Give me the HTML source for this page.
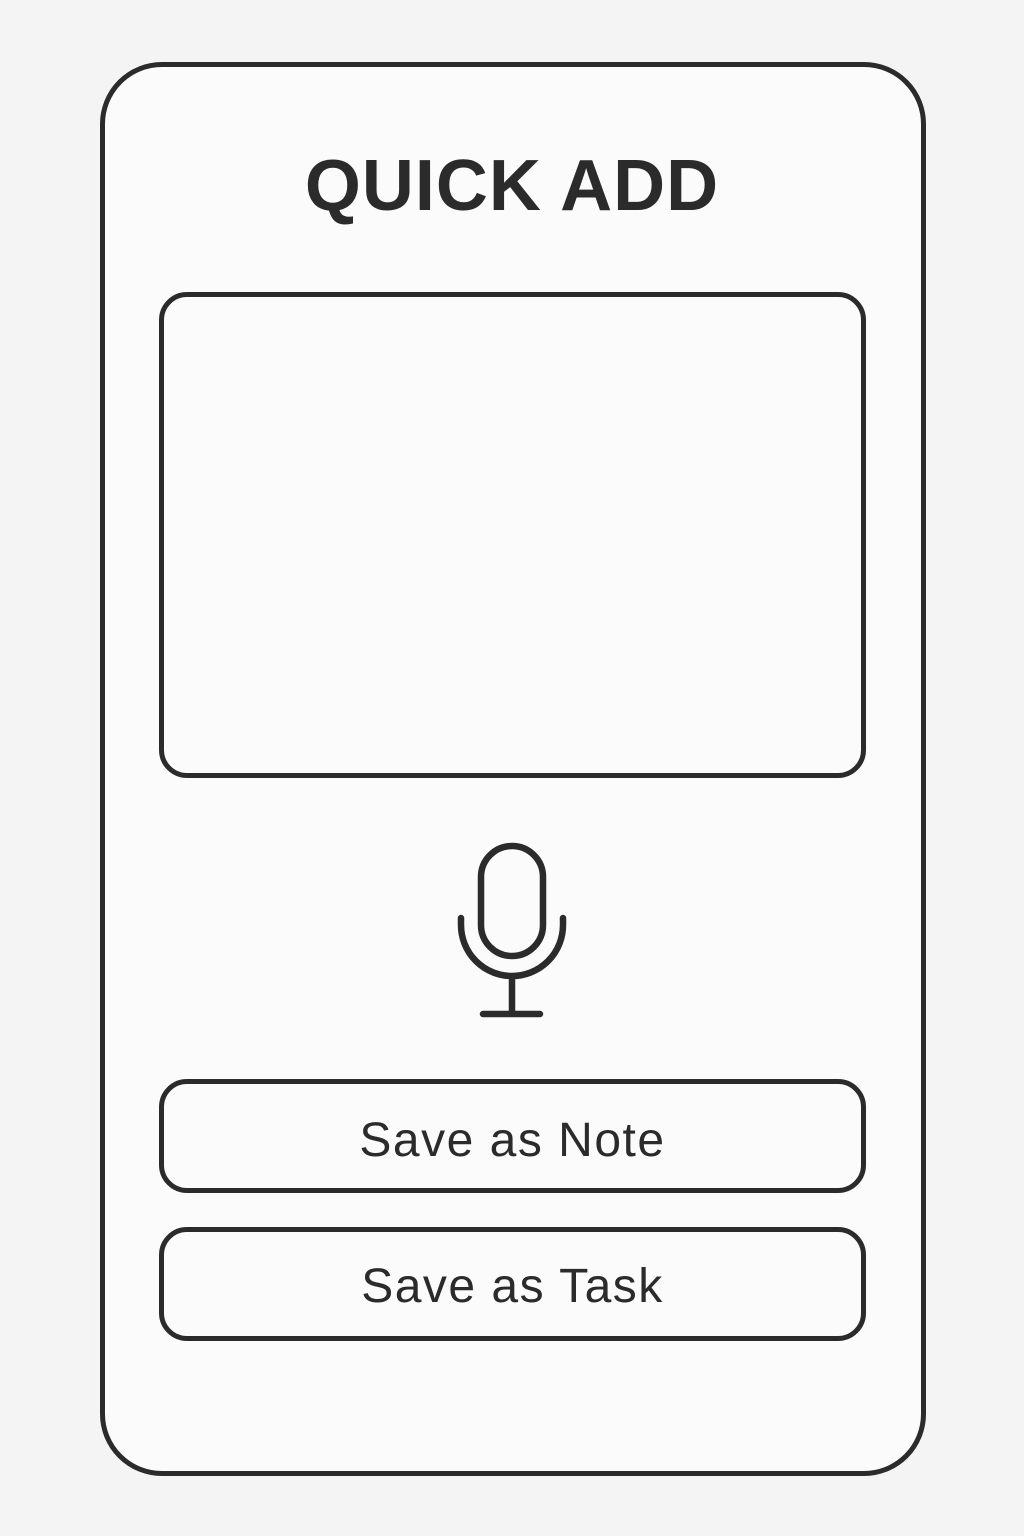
<!DOCTYPE html>
<html><head><style>
html,body{margin:0;padding:0;background:#f4f4f4;}
body{width:1024px;height:1536px;position:relative;font-family:"Liberation Sans",sans-serif;color:#2b2b2b;}
.card{position:absolute;left:100px;top:62px;width:816px;height:1404px;border:5px solid #2b2b2b;border-radius:62px;background:#fbfbfb;}
.title{position:absolute;left:0;width:1024px;top:146px;text-align:center;font-size:72px;font-weight:bold;letter-spacing:1px;line-height:80px;}
.box{position:absolute;left:159px;top:292px;width:697px;height:476px;border:5px solid #2b2b2b;border-radius:28px;background:#fbfbfb;}
.btn{position:absolute;left:159px;width:697px;border:5px solid #2b2b2b;border-radius:28px;text-align:center;font-size:48px;letter-spacing:1.5px;background:#fbfbfb;box-sizing:content-box;}
</style></head><body>
<div class="card"></div>
<div class="title">QUICK ADD</div>
<div class="box"></div>
<svg style="position:absolute;left:0;top:0" width="1024" height="1536">
<g fill="none" stroke="#2b2b2b" stroke-width="6.5" stroke-linecap="round">
<rect x="481" y="846" width="62" height="110" rx="31"/>
<path d="M461 918 V925 A51 51 0 0 0 563 925 V918"/>
<path d="M512 977 V1014 M483 1014 H540"/>
</g></svg>
<div class="btn" style="top:1079px;height:104px;line-height:114px;">Save as Note</div>
<div class="btn" style="top:1227px;height:104px;line-height:110px;">Save as Task</div>
</body></html>
